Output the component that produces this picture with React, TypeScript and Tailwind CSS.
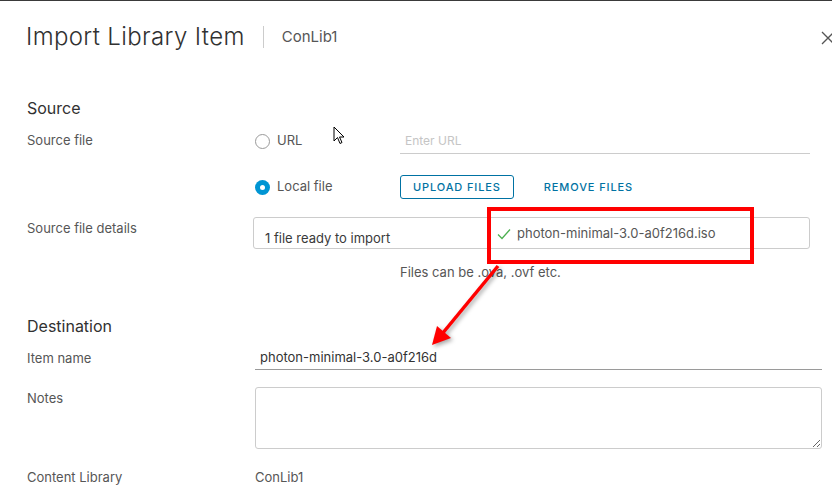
import React from 'react';

const font = { fontFamily: 'Inter, Lato, "Noto Sans", sans-serif' };

const Radio: React.FC<{ checked?: boolean; label: string }> = ({ checked, label }) => (
  <label className="flex items-center gap-[7px] text-[13px] text-[#565656]">
    {checked ? (
      <span className="w-[15px] h-[15px] rounded-full bg-[#0095d3] flex items-center justify-center">
        <span className="w-[5px] h-[5px] rounded-full bg-white" />
      </span>
    ) : (
      <span className="w-[15px] h-[15px] rounded-full border border-[#9a9a9a] bg-white" />
    )}
    {label}
  </label>
);

const Label: React.FC<{ children: React.ReactNode; className?: string }> = ({ children, className = '' }) => (
  <div className={`w-[255px] shrink-0 pl-[27px] text-[13px] text-[#565656] ${className}`}>{children}</div>
);

export default function App() {
  return (
    <div className="relative w-full h-[491px] overflow-hidden bg-white border-t border-[#3a3a3a]" style={font}>
      {/* Header */}
      <div className="flex items-center h-[34px] mt-[19px] pl-[26px]">
        <h1 className="text-[24px] font-light tracking-[0.015em] text-[#313131]">Import Library Item</h1>
        <span className="w-px h-[22px] bg-[#cccccc] mx-[18px]" />
        <span className="text-[15px] text-[#565656]">ConLib1</span>
      </div>
      <svg className="absolute left-[821px] top-[30px]" width="14" height="14" viewBox="0 0 14 14">
        <path d="M1 1 L13 13 M13 1 L1 13" stroke="#555" strokeWidth="1.3" />
      </svg>

      {/* Source */}
      <div className="mt-[42px] pl-[27px] h-[24px] flex items-center text-[16px] text-[#313131]">Source</div>

      <div className="mt-[5px] flex items-center h-[32px]">
        <Label>Source file</Label>
        <div className="w-[145px] shrink-0">
          <Radio label="URL" />
        </div>
        <div className="flex-1 mr-[22px] h-[26px] border-b border-[#cccccc] flex items-center">
          <input
            placeholder="Enter URL"
            className="w-full pl-[5px] text-[12px] text-[#333] placeholder:text-[#c5c5c5] outline-none bg-transparent"
          />
        </div>
      </div>

      <div className="mt-[14px] flex items-center h-[32px]">
        <div className="w-[255px] shrink-0" />
        <div className="w-[145px] shrink-0">
          <Radio checked label="Local file" />
        </div>
        <button className="h-[24px] px-[12px] border border-[#0072a3] rounded-[3px] text-[11px] font-medium tracking-[0.08em] text-[#0072a3]">
          UPLOAD FILES
        </button>
        <button className="ml-[30px] h-[24px] text-[11px] font-medium tracking-[0.08em] text-[#0072a3]">
          REMOVE FILES
        </button>
      </div>

      <div className="mt-[14px] flex items-start">
        <div className="pt-[2px]">
          <Label>Source file details</Label>
        </div>
        <div className="flex-1 mr-[22px] -ml-[2px] h-[32px] border border-[#cccccc] rounded-[3px] flex">
          <span className="w-[243px] shrink-0 pl-[11px] self-end pb-0 text-[13px] text-[#3a3a3a]">1 file ready to import</span>
          <span className="flex items-center gap-[6px] pt-[6px] self-start text-[13px] text-[#565656]">
            <svg width="14" height="12" viewBox="0 0 14 12">
              <path d="M1 6.5 L5 10.5 L13 1.5" fill="none" stroke="#4caf50" strokeWidth="1.3" />
            </svg>
            photon-minimal-3.0-a0f216d.iso
          </span>
        </div>
      </div>

      <div className="mt-[16px] pl-[400px] h-[16px] flex items-center text-[13px] text-[#565656]">
        Files can be .ova, .ovf etc.
      </div>

      {/* Destination */}
      <div className="mt-[33px] pl-[27px] h-[24px] flex items-center text-[16px] text-[#313131]">Destination</div>

      <div className="mt-[3px] flex items-center h-[30px]">
        <Label className="pt-[5px]">Item name</Label>
        <div className="flex-1 mr-[10px] h-[28px] border-b border-[#9a9a9a] flex items-center">
          <input
            defaultValue="photon-minimal-3.0-a0f216d"
            className="w-full pl-[5px] pt-[5px] text-[13px] text-[#333] outline-none bg-transparent"
          />
        </div>
      </div>

      <div className="mt-[16px] flex items-start">
        <div className="pt-[2px]">
          <Label>Notes</Label>
        </div>
        <textarea className="flex-1 mr-[10px] h-[62px] border border-[#cccccc] rounded-[3px] outline-none resize-y" />
      </div>

      <div className="mt-[19px] flex items-center h-[20px]">
        <Label>Content Library</Label>
        <span className="text-[13px] text-[#565656]">ConLib1</span>
      </div>

      {/* Annotation overlay */}
      <div className="absolute left-[487px] top-[206px] w-[267px] h-[57px] border-4 border-[#ff0000]" />
      <svg className="absolute left-0 top-0 pointer-events-none" width="832" height="491" style={{ filter: 'drop-shadow(2px 2px 2px rgba(0,0,0,0.35))' }}>
        <line x1="498" y1="265" x2="442" y2="333" stroke="#ff0000" strokeWidth="3.5" />
        <polygon points="432,344 437,325 451,337" fill="#ff0000" />
      </svg>

      {/* Mouse cursor */}
      <svg className="absolute left-[333px] top-[125px]" width="14" height="20" viewBox="0 0 14 20">
        <path d="M1 1 L1 15 L4.5 11.5 L7 17.5 L9 16.5 L6.5 11 L11 11 Z" fill="white" stroke="black" strokeWidth="1" strokeLinejoin="miter" />
      </svg>
    </div>
  );
}
